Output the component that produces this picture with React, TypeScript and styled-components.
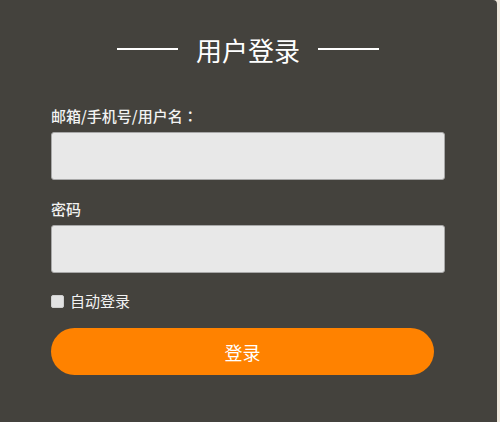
import styled, { createGlobalStyle } from 'styled-components';

const GlobalStyle = createGlobalStyle`
  html, body {
    margin: 0;
    padding: 0;
    background: #eee7dc;
  }
  body {
    font-family: "Noto Sans CJK SC", "Noto Sans", "Liberation Sans", sans-serif;
  }
`;

const Panel = styled.div`
  width: 497px;
  height: 422px;
  box-sizing: border-box;
  background: #44423d;
  border-top-right-radius: 4px;
  padding: 32px 52px 0 51px;
`;

const TitleRow = styled.div`
  display: flex;
  align-items: center;
  justify-content: center;
  gap: 18px;
  height: 36px;
`;

const TitleLine = styled.span`
  width: 61px;
  height: 2px;
  background: #ffffff;
  margin-top: -2px;
`;

const Title = styled.h1`
  margin: 0;
  font-size: 26px;
  font-weight: 400;
  line-height: 36px;
  color: #ffffff;
`;

const Form = styled.form`
  display: flex;
  flex-direction: column;
  margin-top: 38px;
`;

const Field = styled.div<{ $gap?: number }>`
  display: flex;
  flex-direction: column;
  margin-top: ${(p) => p.$gap ?? 0}px;
`;

const Label = styled.label`
  font-size: 15px;
  line-height: 20px;
  font-weight: 500;
  color: #f2f2f2;
  margin-bottom: 6px;
`;

const Colon = styled.span`
  font-family: "Noto Sans CJK TC", "Noto Sans CJK SC", sans-serif;
`;

const Input = styled.input`
  box-sizing: border-box;
  width: 100%;
  height: 48px;
  border: 1px solid #a8a8a8;
  border-radius: 3px;
  background: #e8e8e8;
  font-size: 15px;
  padding: 0 10px;
  outline: none;
`;

const RememberRow = styled.label`
  display: flex;
  align-items: center;
  gap: 6px;
  margin-top: 18px;
  font-size: 15px;
  line-height: 20px;
  color: #f2f2f2;
`;

const Check = styled.input`
  appearance: none;
  margin: 0;
  width: 13px;
  height: 13px;
  box-sizing: border-box;
  background: #e2e2e2;
  border: 1px solid #cfcfcf;
  border-radius: 2px;
`;

const SubmitButton = styled.button`
  margin-top: 17px;
  width: 383px;
  height: 47px;
  border: none;
  border-radius: 24px;
  background: #ff8200;
  color: #ffffff;
  font-family: inherit;
  font-size: 18px;
  cursor: pointer;
`;

export default function App() {
  return (
    <>
      <GlobalStyle />
      <Panel>
        <TitleRow>
          <TitleLine />
          <Title>用户登录</Title>
          <TitleLine />
        </TitleRow>
        <Form onSubmit={(e) => e.preventDefault()}>
          <Field>
            <Label>
              邮箱/手机号/用户名<Colon>：</Colon>
            </Label>
            <Input type="text" />
          </Field>
          <Field $gap={19}>
            <Label>密码</Label>
            <Input type="password" />
          </Field>
          <RememberRow>
            <Check type="checkbox" />
            自动登录
          </RememberRow>
          <SubmitButton type="submit">登录</SubmitButton>
        </Form>
      </Panel>
    </>
  );
}
